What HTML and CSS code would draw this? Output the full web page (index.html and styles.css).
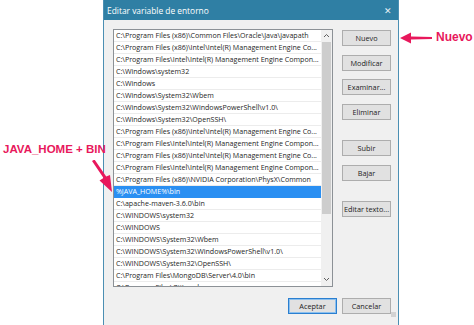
FILE: index.html
```html
<!DOCTYPE html>
<html lang="es">
<head>
    <meta charset="UTF-8">
    <title>Editar variable de entorno</title>
    <link rel="stylesheet" href="styles.css">
</head>
<body>
    <div class="stage">
        <div class="window">
            <div class="titlebar">
                <span class="title">Editar variable de entorno</span>
                <span class="close">&#x2715;</span>
            </div>
            <div class="content">
                <div class="main">
                    <div class="listbox">
                        <ul class="paths">
                            <li>C:\Program Files (x86)\Common Files\Oracle\Java\javapath</li>
                            <li>C:\Program Files (x86)\Intel\Intel(R) Management Engine Co...</li>
                            <li>C:\Program Files\Intel\Intel(R) Management Engine Compon...</li>
                            <li>C:\Windows\system32</li>
                            <li>C:\Windows</li>
                            <li>C:\Windows\System32\Wbem</li>
                            <li>C:\Windows\System32\WindowsPowerShell\v1.0\</li>
                            <li>C:\Windows\System32\OpenSSH\</li>
                            <li>C:\Program Files (x86)\Intel\Intel(R) Management Engine Co...</li>
                            <li>C:\Program Files\Intel\Intel(R) Management Engine Compon...</li>
                            <li>C:\Program Files (x86)\Intel\Intel(R) Management Engine Co...</li>
                            <li>C:\Program Files\Intel\Intel(R) Management Engine Compon...</li>
                            <li>C:\Program Files (x86)\NVIDIA Corporation\PhysX\Common</li>
                            <li class="selected">%JAVA_HOME%\bin</li>
                            <li>C:\apache-maven-3.6.0\bin</li>
                            <li>C:\WINDOWS\system32</li>
                            <li>C:\WINDOWS</li>
                            <li>C:\WINDOWS\System32\Wbem</li>
                            <li>C:\WINDOWS\System32\WindowsPowerShell\v1.0\</li>
                            <li>C:\WINDOWS\System32\OpenSSH\</li>
                            <li>C:\Program Files\MongoDB\Server\4.0\bin</li>
                            <li>C:\Program Files\Git\cmd</li>
                        </ul>
                        <div class="scrollbar">
                            <svg class="arrow-up" width="7" height="5" viewBox="0 0 7 5"><path d="M1 4 L3.5 1.5 L6 4" fill="none" stroke="#606060" stroke-width="1"/></svg>
                            <div class="thumb"></div>
                            <svg class="arrow-down" width="7" height="5" viewBox="0 0 7 5"><path d="M1 1 L3.5 3.5 L6 1" fill="none" stroke="#606060" stroke-width="1"/></svg>
                        </div>
                    </div>
                    <div class="actions">
                        <button class="btn">Nuevo</button>
                        <button class="btn">Modificar</button>
                        <button class="btn">Examinar...</button>
                        <button class="btn">Eliminar</button>
                        <button class="btn gap">Subir</button>
                        <button class="btn">Bajar</button>
                        <button class="btn gap">Editar texto...</button>
                    </div>
                </div>
                <div class="footer">
                    <button class="btn default">Aceptar</button>
                    <button class="btn">Cancelar</button>
                </div>
                <div class="grip"></div>
            </div>
        </div>

        <div class="note note-nuevo">Nuevo</div>
        <svg class="pointer pointer-nuevo" width="34" height="14" viewBox="0 0 34 14">
            <path d="M33 6 L12 5.6 L12 1.5 L1 7 L12 12.5 L12 8.4 L33 8 Z" fill="#e8185c"/>
        </svg>

        <div class="note note-java">JAVA_HOME + BIN</div>
        <svg class="pointer pointer-java" width="26" height="34" viewBox="0 0 26 34">
            <path d="M2 1 L13.5 18 L9.5 20.5 L22 32 L20 15 L16.2 16.4 L4.5 -0.5 Z" fill="#e8185c"/>
        </svg>
    </div>
</body>
</html>
```

FILE: styles.css
```css
body {
    margin: 0;
    background: #ffffff;
    font-family: "Open Sans", "Noto Sans", Arial, sans-serif;
}
.stage {
    position: relative;
    width: 474px;
    height: 325px;
    overflow: hidden;
}
.window {
    margin-left: 103px;
    width: 296px;
    height: 330px;
    background: #f0f0f0;
    box-sizing: border-box;
    border-left: 1px solid #4b8fb3;
    border-right: 1px solid #4b8fb3;
    display: flex;
    flex-direction: column;
}
.titlebar {
    height: 20px;
    background: #2f7fa4;
    color: #ffffff;
    display: flex;
    align-items: center;
    justify-content: space-between;
    padding: 0 6px 0 3px;
    font-size: 8.4px;
}
.close {
    font-size: 9px;
    color: #e6f0f5;
}
.content {
    position: relative;
    flex: 1;
    padding: 9px 7px 0 9px;
}
.main {
    display: flex;
    gap: 9px;
}
.listbox {
    width: 220px;
    height: 258px;
    box-sizing: border-box;
    border: 1px solid #8c9196;
    background: #ffffff;
    display: flex;
    overflow: hidden;
}
.paths {
    list-style: none;
    margin: 0;
    padding: 0;
    flex: 1;
    min-width: 0;
}
.paths li {
    height: 12px;
    line-height: 11px;
    box-sizing: border-box;
    border-bottom: 1px solid #ececec;
    padding-left: 2px;
    font-size: 7.1px;
    color: #262626;
    white-space: nowrap;
    overflow: hidden;
}
.paths li.selected {
    background: #2a8ff2;
    color: #ffffff;
    border-bottom-color: #2a8ff2;
}
.scrollbar {
    width: 11px;
    background: #f0f0f0;
    display: flex;
    flex-direction: column;
    align-items: center;
    padding: 2px 0;
}
.arrow-up,
.arrow-down {
    margin: 1px 0;
}
.thumb {
    width: 9px;
    height: 172px;
    background: #cdcdcd;
    margin-top: 3px;
}
.arrow-down {
    margin-top: auto;
    margin-bottom: 2px;
}
.actions {
    display: flex;
    flex-direction: column;
    gap: 8.5px;
    padding-top: 1px;
}
.actions .gap {
    margin-top: 12px;
}
.btn {
    width: 49px;
    height: 16px;
    padding: 0;
    background: #e1e1e1;
    border: 1px solid #adadad;
    font-family: "Open Sans", "Noto Sans", Arial, sans-serif;
    font-size: 7.3px;
    color: #222222;
    white-space: nowrap;
}
.btn.default {
    border-color: #2a7fd0;
    box-shadow: inset 0 0 0 1px #8cc0ee;
}
.footer {
    display: flex;
    justify-content: flex-end;
    gap: 5px;
    margin-top: 11px;
}
.grip {
    position: absolute;
    right: 2px;
    top: 292px;
    width: 5px;
    height: 5px;
    background: radial-gradient(circle, #b0b0b0 0.6px, transparent 0.8px) 0 0 / 2px 2px;
}
.note {
    position: absolute;
    font-family: "Liberation Sans", Arial, sans-serif;
    font-weight: bold;
    color: #e8185c;
}
.note-nuevo {
    left: 436px;
    top: 30px;
    font-size: 12px;
}
.note-java {
    left: 3px;
    top: 143px;
    font-size: 11.5px;
}
.pointer {
    position: absolute;
}
.pointer-nuevo {
    left: 399px;
    top: 31px;
}
.pointer-java {
    left: 90px;
    top: 160px;
}
```
